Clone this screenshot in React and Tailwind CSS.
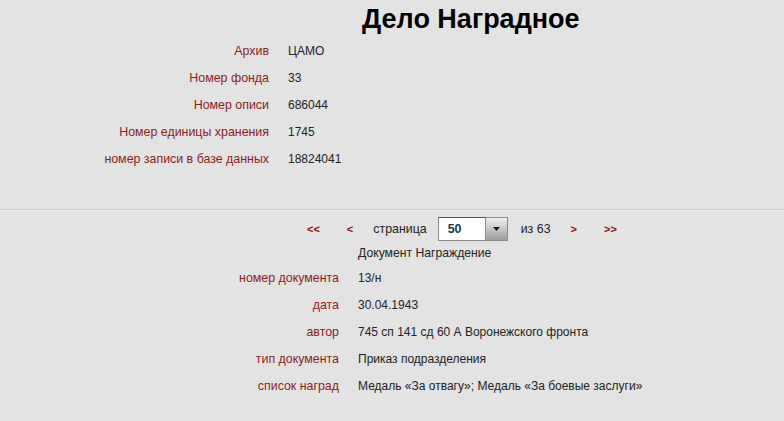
import React from 'react'

const archive = [
  ['Архив', 'ЦАМО'],
  ['Номер фонда', '33'],
  ['Номер описи', '686044'],
  ['Номер единицы хранения', '1745'],
  ['номер записи в базе данных', '18824041'],
]

const doc = [
  ['номер документа', '13/н'],
  ['дата', '30.04.1943'],
  ['автор', '745 сп 141 сд 60 А Воронежского фронта'],
  ['тип документа', 'Приказ подразделения'],
  ['список наград', 'Медаль «За отвагу»; Медаль «За боевые заслуги»'],
]

function Row({ label, value, labelW }) {
  return (
    <div className="flex h-[27px] items-baseline leading-[27px]">
      <div className={`${labelW} shrink-0 text-right text-[#8c1c1c]`}>{label}</div>
      <div className="ml-[19px] text-[12px] text-[#222]">{value}</div>
    </div>
  )
}

export default function App() {
  return (
    <div className="min-h-screen bg-[#e3e3e3] font-['Liberation_Sans',Arial,sans-serif] text-[12.4px] leading-none">
      {/* Header */}
      <h1 className="h-[38px] pl-[362px] pt-[5px] text-[27px] font-bold leading-[28px] text-black">
        Дело Наградное
      </h1>

      <div className="pb-[36px]">
        {archive.map(([l, v]) => (
          <Row key={l} label={l} value={v} labelW="w-[269px]" />
        ))}
      </div>

      <div className="h-px bg-[#c4cbc8]" />
      <div className="h-px bg-[#f1f1f1]" />

      {/* Pager */}
      <div className="mt-[6px] flex h-[24px] items-center pl-[307px]">
        <span className="text-[11px] font-bold text-[#8b0d0d]">&lt;&lt;</span>
        <span className="ml-[27px] text-[11px] font-bold text-[#8b0d0d]">&lt;</span>
        <span className="ml-[20px] text-[#222]">страница</span>
        <div className="ml-[11px] flex h-[24px]">
          <div className="flex w-[48px] items-center border border-[#8a8a8a] border-t-[#555] bg-white pl-[9px] font-bold text-[#163a4a]">
            50
          </div>
          <div className="flex w-[22px] items-center justify-center border border-l-0 border-[#8a8a8a] bg-gradient-to-b from-[#f2f2f2] to-[#9c9c9c]">
            <svg width="7" height="4" viewBox="0 0 7 4">
              <path d="M0 0h7L3.5 4z" fill="#111" />
            </svg>
          </div>
        </div>
        <span className="ml-[13px] text-[#222]">из 63</span>
        <span className="ml-[20px] text-[11px] font-bold text-[#8b0d0d]">&gt;</span>
        <span className="ml-[27px] text-[11px] font-bold text-[#8b0d0d]">&gt;&gt;</span>
      </div>

      <div className="flex h-[24px] items-center pl-[358px] text-[12.2px] text-[#222]">Документ Награждение</div>

      <div>
        {doc.map(([l, v]) => (
          <Row key={l} label={l} value={v} labelW="w-[339px]" />
        ))}
      </div>
    </div>
  )
}
